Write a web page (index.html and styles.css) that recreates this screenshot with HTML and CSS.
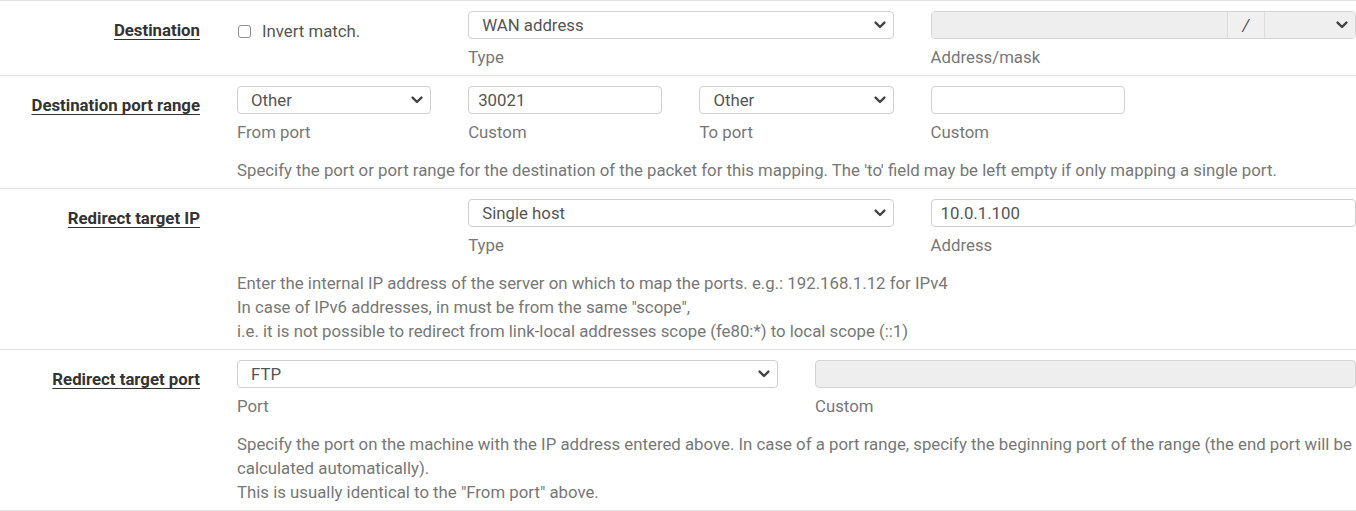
FILE: index.html
```html
<!DOCTYPE html>
<html lang="en">
<head>
<meta charset="utf-8">
<title>Port forward</title>
<link rel="stylesheet" href="styles.css">
</head>
<body>
<div class="form">

  <div class="row">
    <div class="label"><span class="req">Destination</span></div>
    <div class="content">
      <div class="field span-1-3">
        <label class="check"><span class="box"></span><span>Invert match.</span></label>
      </div>
      <div class="field span-3-7">
        <div class="control select"><span class="val">WAN address</span><svg class="chev" viewBox="0 0 12 8"><path d="M1.6 1.6 L6 6 L10.4 1.6"/></svg></div>
        <div class="sub">Type</div>
      </div>
      <div class="field span-7-11">
        <div class="group">
          <div class="g-input"></div>
          <div class="g-addon">/</div>
          <div class="g-select"><svg class="chev" viewBox="0 0 12 8"><path d="M1.6 1.6 L6 6 L10.4 1.6"/></svg></div>
        </div>
        <div class="sub">Address/mask</div>
      </div>
    </div>
  </div>

  <div class="row">
    <div class="label"><span class="req">Destination port range</span></div>
    <div class="content">
      <div class="field span-1-3">
        <div class="control select"><span class="val">Other</span><svg class="chev" viewBox="0 0 12 8"><path d="M1.6 1.6 L6 6 L10.4 1.6"/></svg></div>
        <div class="sub">From port</div>
      </div>
      <div class="field span-3-5">
        <div class="control input"><span class="val">30021</span></div>
        <div class="sub">Custom</div>
      </div>
      <div class="field span-5-7">
        <div class="control select"><span class="val">Other</span><svg class="chev" viewBox="0 0 12 8"><path d="M1.6 1.6 L6 6 L10.4 1.6"/></svg></div>
        <div class="sub">To port</div>
      </div>
      <div class="field span-7-9">
        <div class="control input"></div>
        <div class="sub">Custom</div>
      </div>
      <div class="help span-1-11">Specify the port or port range for the destination of the packet for this mapping. The 'to' field may be left empty if only mapping a single port.</div>
    </div>
  </div>

  <div class="row">
    <div class="label"><span class="req">Redirect target IP</span></div>
    <div class="content">
      <div class="field span-3-7">
        <div class="control select"><span class="val">Single host</span><svg class="chev" viewBox="0 0 12 8"><path d="M1.6 1.6 L6 6 L10.4 1.6"/></svg></div>
        <div class="sub">Type</div>
      </div>
      <div class="field span-7-11">
        <div class="control input"><span class="val">10.0.1.100</span></div>
        <div class="sub">Address</div>
      </div>
      <div class="help span-1-11">Enter the internal IP address of the server on which to map the ports. e.g.: 192.168.1.12 for IPv4<br>In case of IPv6 addresses, in must be from the same "scope",<br>i.e. it is not possible to redirect from link-local addresses scope (fe80:*) to local scope (::1)</div>
    </div>
  </div>

  <div class="row">
    <div class="label"><span class="req">Redirect target port</span></div>
    <div class="content">
      <div class="field span-1-6">
        <div class="control select"><span class="val">FTP</span><svg class="chev" viewBox="0 0 12 8"><path d="M1.6 1.6 L6 6 L10.4 1.6"/></svg></div>
        <div class="sub">Port</div>
      </div>
      <div class="field span-6-11">
        <div class="control input disabled"></div>
        <div class="sub">Custom</div>
      </div>
      <div class="help span-1-11">Specify the port on the machine with the IP address entered above. In case of a port range, specify the beginning port of the range (the end port will be<br>calculated automatically).<br>This is usually identical to the "From port" above.</div>
    </div>
  </div>

</div>
</body>
</html>
```

FILE: styles.css
```css
* { box-sizing: border-box; }
html, body { margin: 0; padding: 0; background: #fff; }
body {
  font-family: Roboto, "Liberation Sans", sans-serif;
  font-size: 16.8px;
  color: #555;
  overflow: hidden;
  width: 1356px;
}
.form { width: 1356px; }
.row {
  display: flex;
  border-top: 1px solid #e2e2e2;
}
.row:last-child { border-bottom: 1px solid #e2e2e2; }
.label {
  width: 237px;
  flex: 0 0 237px;
  padding: 19px 37px 0 0;
  text-align: right;
  line-height: 20px;
}
.req {
  font-weight: 700;
  color: #333;
  text-decoration: underline;
  text-underline-offset: 3px;
  text-decoration-thickness: 1px;
}
.content {
  flex: 1;
  display: grid;
  grid-template-columns: repeat(10, 1fr);
  column-gap: 37px;
  padding: 10px 0 6px;
  align-content: start;
}
.span-1-3 { grid-column: 1 / 3; }
.span-3-5 { grid-column: 3 / 5; }
.span-5-7 { grid-column: 5 / 7; }
.span-7-9 { grid-column: 7 / 9; }
.span-3-7 { grid-column: 3 / 7; }
.span-7-11 { grid-column: 7 / 11; }
.span-1-6 { grid-column: 1 / 6; }
.span-6-11 { grid-column: 6 / 11; }
.span-1-11 { grid-column: 1 / 11; }
.field { display: flex; flex-direction: column; grid-row: 1; }
.help { grid-row: 2; }

.control {
  height: 28px;
  border: 1px solid #cfcfcf;
  border-radius: 4px;
  background: #fff;
  display: flex;
  align-items: center;
  color: #555;
}
.select { padding: 0 7px 0 13px; justify-content: space-between; }
.input { padding: 0 9px; }
.disabled { background: #eeeeee; border-color: #d4d4d4; }
.chev {
  width: 12px;
  height: 8px;
  fill: none;
  stroke: #444;
  stroke-width: 2.4;
  stroke-linecap: round;
  stroke-linejoin: round;
}
.sub {
  margin-top: 8px;
  margin-bottom: 2px;
  line-height: 20px;
  color: #777;
}
.help {
  margin-top: 14px;
  line-height: 24px;
  color: #777;
  white-space: nowrap;
}
.check {
  display: flex;
  align-items: center;
  gap: 11px;
  padding: 10px 0 0 1px;
  line-height: 20px;
  color: #555;
}
.box {
  width: 13px;
  height: 13px;
  border: 1px solid #8f8f8f;
  border-radius: 3px;
  background: #fff;
}
.group {
  height: 28px;
  display: flex;
  border: 1px solid #d4d4d4;
  border-radius: 4px;
  overflow: hidden;
}
.g-input { flex: 1; background: #eeeeee; }
.g-addon {
  width: 38px;
  background: #f0f0f0;
  border-left: 1px solid #dcdcdc;
  border-right: 1px solid #dcdcdc;
  display: flex;
  align-items: center;
  justify-content: center;
  font-style: italic;
  color: #555;
}
.g-select {
  width: 90px;
  background: #efefef;
  display: flex;
  align-items: center;
  justify-content: flex-end;
  padding-right: 7px;
}
```
